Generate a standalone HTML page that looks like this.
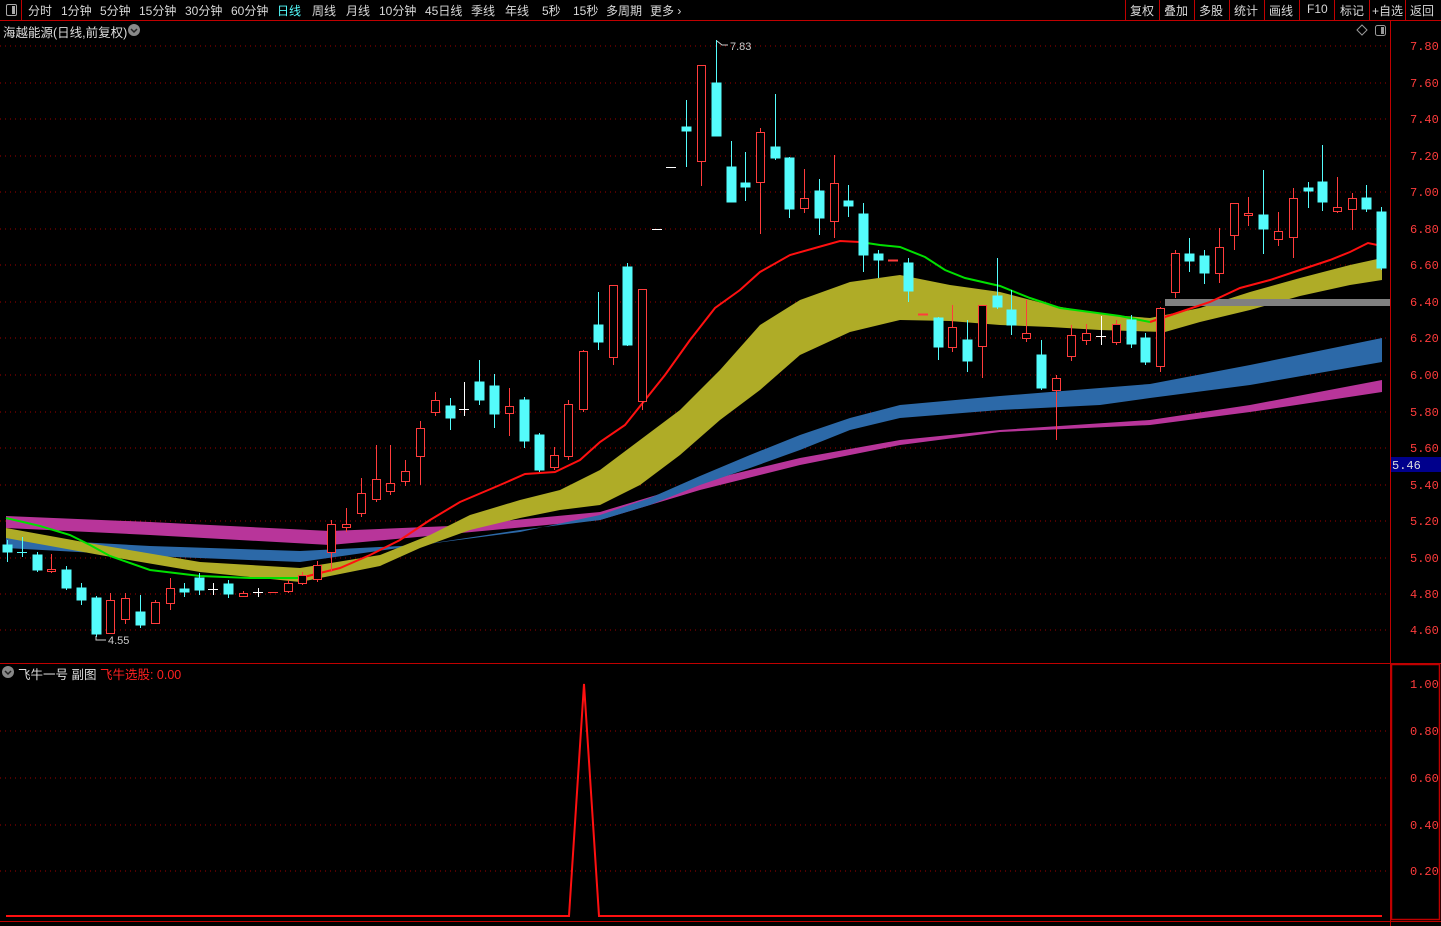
<!DOCTYPE html><html><head><meta charset="utf-8"><style>
body{margin:0;background:#000;width:1441px;height:926px;overflow:hidden;font-family:"Liberation Sans","Noto Sans CJK SC",sans-serif}
.tb{position:absolute;top:0;left:0;width:1441px;height:20px;border-bottom:1px solid #c00000;color:#d8d8d8;font-size:12px}
.tb span{position:absolute;top:2px}
</style></head><body>
<div class="tb">
<div style="position:absolute;left:0;top:0;width:21px;height:20px;border-right:1px solid #c00000"></div>
<div style="position:absolute;left:6px;top:4px;width:9px;height:10px;border:1px solid #aaa;border-radius:2px"><div style="position:absolute;right:1px;top:1px;width:3px;height:8px;background:#aaa"></div></div>
<span style="left:28px">分时</span><span style="left:61px">1分钟</span><span style="left:100px">5分钟</span><span style="left:139px">15分钟</span><span style="left:185px">30分钟</span><span style="left:231px">60分钟</span><span style="left:277px;color:#54fcfc">日线</span><span style="left:312px">周线</span><span style="left:346px">月线</span><span style="left:379px">10分钟</span><span style="left:425px">45日线</span><span style="left:471px">季线</span><span style="left:505px">年线</span><span style="left:542px">5秒</span><span style="left:573px">15秒</span><span style="left:606px">多周期</span><span style="left:650px">更多 ›</span>
<span style="left:1130px">复权</span><span style="left:1164px">叠加</span><span style="left:1199px">多股</span><span style="left:1234px">统计</span><span style="left:1269px">画线</span><span style="left:1307px">F10</span><span style="left:1340px">标记</span><span style="left:1372px">+自选</span><span style="left:1410px">返回</span>
</div>
<svg width="1441" height="926" style="position:absolute;left:0;top:0" xmlns="http://www.w3.org/2000/svg" font-family="Liberation Sans,Noto Sans CJK SC,sans-serif">
<g stroke="#c00000" stroke-width="1">
<line x1="1125.5" y1="0" x2="1125.5" y2="20"/><line x1="1159.5" y1="0" x2="1159.5" y2="20"/><line x1="1194.5" y1="0" x2="1194.5" y2="20"/><line x1="1229.5" y1="0" x2="1229.5" y2="20"/><line x1="1264.5" y1="0" x2="1264.5" y2="20"/><line x1="1299.5" y1="0" x2="1299.5" y2="20"/><line x1="1334.5" y1="0" x2="1334.5" y2="20"/><line x1="1369.5" y1="0" x2="1369.5" y2="20"/><line x1="1405.5" y1="0" x2="1405.5" y2="20"/>
<line x1="1390.5" y1="21" x2="1390.5" y2="926"/>
<line x1="0" y1="663.5" x2="1441" y2="663.5"/>
<rect x="1391.5" y="664.5" width="48" height="255" fill="none" stroke-width="1.5"/>
<line x1="0" y1="921.5" x2="1441" y2="921.5"/>
</g>
<g stroke="#a00000" stroke-dasharray="1 4">
<line x1="0" y1="46" x2="1388" y2="46"/><line x1="0" y1="83" x2="1388" y2="83"/><line x1="0" y1="119" x2="1388" y2="119"/><line x1="0" y1="156" x2="1388" y2="156"/><line x1="0" y1="192" x2="1388" y2="192"/><line x1="0" y1="229" x2="1388" y2="229"/><line x1="0" y1="265" x2="1388" y2="265"/><line x1="0" y1="302" x2="1388" y2="302"/><line x1="0" y1="338" x2="1388" y2="338"/><line x1="0" y1="375" x2="1388" y2="375"/><line x1="0" y1="412" x2="1388" y2="412"/><line x1="0" y1="448" x2="1388" y2="448"/><line x1="0" y1="485" x2="1388" y2="485"/><line x1="0" y1="521" x2="1388" y2="521"/><line x1="0" y1="558" x2="1388" y2="558"/><line x1="0" y1="594" x2="1388" y2="594"/><line x1="0" y1="630" x2="1388" y2="630"/>
<line x1="0" y1="731" x2="1388" y2="731"/><line x1="0" y1="778" x2="1388" y2="778"/><line x1="0" y1="825" x2="1388" y2="825"/><line x1="0" y1="871" x2="1388" y2="871"/>
</g>
<g fill="#ff3c3c" font-size="12" font-family="Liberation Mono,monospace">
<text x="1410" y="50">7.80</text><text x="1410" y="87">7.60</text><text x="1410" y="123">7.40</text><text x="1410" y="160">7.20</text><text x="1410" y="196">7.00</text><text x="1410" y="233">6.80</text><text x="1410" y="269">6.60</text><text x="1410" y="306">6.40</text><text x="1410" y="342">6.20</text><text x="1410" y="379">6.00</text><text x="1410" y="416">5.80</text><text x="1410" y="452">5.60</text><text x="1410" y="489">5.40</text><text x="1410" y="525">5.20</text><text x="1410" y="562">5.00</text><text x="1410" y="598">4.80</text><text x="1410" y="634">4.60</text>
<text x="1410" y="688">1.00</text><text x="1410" y="735">0.80</text><text x="1410" y="782">0.60</text><text x="1410" y="829">0.40</text><text x="1410" y="875">0.20</text>
</g>
<rect x="1391" y="457" width="50" height="15" fill="#00008c"/><text x="1392" y="469" fill="#ddd" font-size="12" font-family="Liberation Mono,monospace">5.46</text>
<polygon fill="#b8359a" points="6,516 150,522 330,531 450,526 600,512 700,482 800,458 900,440 1000,430 1150,420 1250,405 1382,380 1382,392 1250,412 1150,425 1000,432 900,445 800,465 700,490 600,520 450,534 330,545 150,535 6,528"/>
<polygon fill="#2c69a8" points="6,538 150,546 300,551 420,545 520,532 600,515 650,498 700,476 750,455 800,435 850,418 900,405 1000,396 1100,388 1150,384 1250,365 1382,338 1382,362 1250,385 1150,398 1100,405 1000,410 900,418 850,430 800,450 750,468 700,485 650,505 600,520 520,530 420,545 300,562 150,556 6,548"/>
<polygon fill="#afac27" points="6,528 100,545 200,562 300,568 380,555 430,535 470,515 520,500 560,490 600,470 640,440 680,410 720,370 760,325 800,300 850,282 900,275 950,285 1000,292 1050,305 1100,314 1150,318 1200,308 1250,292 1300,278 1350,265 1382,258 1382,280 1350,285 1300,296 1250,310 1200,322 1165,332 1100,330 1050,327 1000,325 950,321 900,320 850,332 800,355 760,390 720,420 680,455 640,485 600,505 560,510 520,518 470,530 420,548 380,566 300,582 200,572 100,555 6,538"/>
<rect x="1165" y="299" width="225" height="7" fill="#808080"/>
<polyline fill="none" stroke="#00e000" stroke-width="2" points="6,518 40,526 70,535 90,545 110,556 150,570 200,576 250,578 300,578"/>
<polyline fill="none" stroke="#ff1010" stroke-width="2" points="300,578 340,568 370,555 400,540 430,520 460,502 500,485 525,474 555,472 580,460 600,442 625,425 645,400 665,375 690,340 715,308 740,290 760,272 790,255 815,248 840,241 860,242"/>
<polyline fill="none" stroke="#00e000" stroke-width="2" points="860,242 880,245 900,247 925,257 945,270 965,278 1000,286 1030,298 1060,308 1090,312 1120,316 1150,322"/>
<polyline fill="none" stroke="#ff1010" stroke-width="2" points="1150,322 1180,312 1210,302 1240,288 1270,280 1300,270 1330,260 1350,252 1368,243 1382,246"/>
<g stroke-width="1">
<g stroke="#54fcfc" fill="#54fcfc">
<line x1="7.5" y1="540" x2="7.5" y2="562"/><rect x="3" y="545" width="9" height="7"/>
<line x1="37.5" y1="552" x2="37.5" y2="572"/><rect x="33" y="555" width="9" height="15"/>
<line x1="66.5" y1="566" x2="66.5" y2="590"/><rect x="62" y="570" width="9" height="18"/>
<line x1="81.5" y1="583" x2="81.5" y2="605"/><rect x="77" y="588" width="9" height="12"/>
<line x1="96.5" y1="596" x2="96.5" y2="637"/><rect x="92" y="598" width="9" height="36"/>
<line x1="140.5" y1="595" x2="140.5" y2="628"/><rect x="136" y="612" width="9" height="13"/>
<line x1="184.5" y1="583" x2="184.5" y2="597"/><rect x="180" y="589" width="9" height="3"/>
<line x1="199.5" y1="573" x2="199.5" y2="595"/><rect x="195" y="578" width="9" height="12"/>
<line x1="228.5" y1="580" x2="228.5" y2="598"/><rect x="224" y="584" width="9" height="10"/>
<line x1="450.5" y1="398" x2="450.5" y2="430"/><rect x="446" y="406" width="9" height="12"/>
<line x1="479.5" y1="360" x2="479.5" y2="405"/><rect x="475" y="382" width="9" height="18"/>
<line x1="494.5" y1="374" x2="494.5" y2="428"/><rect x="490" y="386" width="9" height="28"/>
<line x1="524.5" y1="397" x2="524.5" y2="448"/><rect x="520" y="400" width="9" height="41"/>
<line x1="539.5" y1="433" x2="539.5" y2="472"/><rect x="535" y="435" width="9" height="35"/>
<line x1="598.5" y1="292" x2="598.5" y2="350"/><rect x="594" y="325" width="9" height="17"/>
<line x1="627.5" y1="263" x2="627.5" y2="346"/><rect x="623" y="267" width="9" height="78"/>
<line x1="686.5" y1="100" x2="686.5" y2="167"/><rect x="682" y="127" width="9" height="4"/>
<line x1="716.5" y1="40" x2="716.5" y2="136"/><rect x="712" y="83" width="9" height="53"/>
<line x1="731.5" y1="141" x2="731.5" y2="202"/><rect x="727" y="167" width="9" height="35"/>
<line x1="745.5" y1="152" x2="745.5" y2="201"/><rect x="741" y="183" width="9" height="4"/>
<line x1="775.5" y1="94" x2="775.5" y2="160"/><rect x="771" y="147" width="9" height="11"/>
<line x1="789.5" y1="157" x2="789.5" y2="218"/><rect x="785" y="158" width="9" height="51"/>
<line x1="819.5" y1="179" x2="819.5" y2="235"/><rect x="815" y="191" width="9" height="27"/>
<line x1="848.5" y1="185" x2="848.5" y2="217"/><rect x="844" y="201" width="9" height="5"/>
<line x1="863.5" y1="203" x2="863.5" y2="272"/><rect x="859" y="214" width="9" height="41"/>
<line x1="878.5" y1="250" x2="878.5" y2="278"/><rect x="874" y="254" width="9" height="6"/>
<line x1="908.5" y1="258" x2="908.5" y2="302"/><rect x="904" y="263" width="9" height="28"/>
<line x1="938.5" y1="317" x2="938.5" y2="360"/><rect x="934" y="318" width="9" height="29"/>
<line x1="967.5" y1="320" x2="967.5" y2="372"/><rect x="963" y="340" width="9" height="21"/>
<line x1="997.5" y1="258" x2="997.5" y2="309"/><rect x="993" y="296" width="9" height="11"/>
<line x1="1011.5" y1="290" x2="1011.5" y2="335"/><rect x="1007" y="310" width="9" height="15"/>
<line x1="1041.5" y1="340" x2="1041.5" y2="390"/><rect x="1037" y="355" width="9" height="33"/>
<line x1="1131.5" y1="315" x2="1131.5" y2="348"/><rect x="1127" y="320" width="9" height="24"/>
<line x1="1145.5" y1="333" x2="1145.5" y2="365"/><rect x="1141" y="338" width="9" height="24"/>
<line x1="1189.5" y1="238" x2="1189.5" y2="272"/><rect x="1185" y="254" width="9" height="7"/>
<line x1="1204.5" y1="250" x2="1204.5" y2="284"/><rect x="1200" y="256" width="9" height="17"/>
<line x1="1263.5" y1="170" x2="1263.5" y2="254"/><rect x="1259" y="215" width="9" height="14"/>
<line x1="1308.5" y1="182" x2="1308.5" y2="208"/><rect x="1304" y="188" width="9" height="3"/>
<line x1="1322.5" y1="145" x2="1322.5" y2="211"/><rect x="1318" y="182" width="9" height="20"/>
<line x1="1366.5" y1="185" x2="1366.5" y2="212"/><rect x="1362" y="198" width="9" height="11"/>
<line x1="1381.5" y1="207" x2="1381.5" y2="270"/><rect x="1377" y="212" width="9" height="56"/>
<line x1="17" y1="552.5" x2="27" y2="552.5"/><line x1="22.5" y1="537" x2="22.5" y2="557"/>
</g>
<g stroke="#ff3c3c" fill="#000">
<line x1="51.5" y1="554" x2="51.5" y2="573"/><rect x="47.5" y="569.5" width="8" height="2"/>
<line x1="110.5" y1="593" x2="110.5" y2="634"/><rect x="106.5" y="600.5" width="8" height="33"/>
<line x1="125.5" y1="593" x2="125.5" y2="624"/><rect x="121.5" y="598.5" width="8" height="21"/>
<line x1="155.5" y1="600" x2="155.5" y2="624"/><rect x="151.5" y="602.5" width="8" height="21"/>
<line x1="170.5" y1="578" x2="170.5" y2="610"/><rect x="166.5" y="588.5" width="8" height="15"/>
<line x1="243.5" y1="591" x2="243.5" y2="597"/><rect x="239.5" y="593.5" width="8" height="3"/>
<line x1="268" y1="592.5" x2="278" y2="592.5"/>
<line x1="288.5" y1="580" x2="288.5" y2="593"/><rect x="284.5" y="583.5" width="8" height="8"/>
<line x1="302.5" y1="572" x2="302.5" y2="585"/><rect x="298.5" y="575.5" width="8" height="8"/>
<line x1="317.5" y1="561" x2="317.5" y2="582"/><rect x="313.5" y="565.5" width="8" height="14"/>
<line x1="331.5" y1="520" x2="331.5" y2="572"/><rect x="327.5" y="524.5" width="8" height="28"/>
<line x1="346.5" y1="508" x2="346.5" y2="532"/><rect x="342.5" y="524.5" width="8" height="3"/>
<line x1="361.5" y1="478" x2="361.5" y2="517"/><rect x="357.5" y="493.5" width="8" height="20"/>
<line x1="376.5" y1="445" x2="376.5" y2="502"/><rect x="372.5" y="479.5" width="8" height="20"/>
<line x1="390.5" y1="445" x2="390.5" y2="495"/><rect x="386.5" y="483.5" width="8" height="8"/>
<line x1="405.5" y1="460" x2="405.5" y2="486"/><rect x="401.5" y="471.5" width="8" height="10"/>
<line x1="420.5" y1="421" x2="420.5" y2="485"/><rect x="416.5" y="428.5" width="8" height="28"/>
<line x1="435.5" y1="392" x2="435.5" y2="416"/><rect x="431.5" y="400.5" width="8" height="12"/>
<line x1="509.5" y1="388" x2="509.5" y2="436"/><rect x="505.5" y="406.5" width="8" height="7"/>
<line x1="554.5" y1="447" x2="554.5" y2="470"/><rect x="550.5" y="455.5" width="8" height="12"/>
<line x1="568.5" y1="400" x2="568.5" y2="460"/><rect x="564.5" y="404.5" width="8" height="52"/>
<line x1="583.5" y1="350" x2="583.5" y2="412"/><rect x="579.5" y="351.5" width="8" height="58"/>
<line x1="613.5" y1="285" x2="613.5" y2="365"/><rect x="609.5" y="285.5" width="8" height="72"/>
<line x1="642.5" y1="289" x2="642.5" y2="410"/><rect x="638.5" y="289.5" width="8" height="112"/>
<line x1="701.5" y1="65" x2="701.5" y2="186"/><rect x="697.5" y="65.5" width="8" height="96"/>
<line x1="760.5" y1="128" x2="760.5" y2="234"/><rect x="756.5" y="132.5" width="8" height="50"/>
<line x1="804.5" y1="169" x2="804.5" y2="213"/><rect x="800.5" y="198.5" width="8" height="10"/>
<line x1="834.5" y1="155" x2="834.5" y2="238"/><rect x="830.5" y="183.5" width="8" height="38"/>
<line x1="888" y1="260.5" x2="898" y2="260.5" stroke-width="2"/>
<line x1="918" y1="314.5" x2="928" y2="314.5" stroke-width="2"/>
<line x1="952.5" y1="305" x2="952.5" y2="352"/><rect x="948.5" y="327.5" width="8" height="20"/>
<line x1="982.5" y1="305" x2="982.5" y2="378"/><rect x="978.5" y="305.5" width="8" height="41"/>
<line x1="1026.5" y1="300" x2="1026.5" y2="342"/><rect x="1022.5" y="333.5" width="8" height="5"/>
<line x1="1056.5" y1="375" x2="1056.5" y2="440"/><rect x="1052.5" y="378.5" width="8" height="12"/>
<line x1="1071.5" y1="325" x2="1071.5" y2="361"/><rect x="1067.5" y="335.5" width="8" height="21"/>
<line x1="1086.5" y1="324" x2="1086.5" y2="345"/><rect x="1082.5" y="333.5" width="8" height="7"/>
<line x1="1116.5" y1="320" x2="1116.5" y2="345"/><rect x="1112.5" y="324.5" width="8" height="18"/>
<line x1="1160.5" y1="307" x2="1160.5" y2="372"/><rect x="1156.5" y="308.5" width="8" height="58"/>
<line x1="1175.5" y1="250" x2="1175.5" y2="298"/><rect x="1171.5" y="253.5" width="8" height="39"/>
<line x1="1219.5" y1="228" x2="1219.5" y2="283"/><rect x="1215.5" y="247.5" width="8" height="26"/>
<line x1="1234.5" y1="203" x2="1234.5" y2="250"/><rect x="1230.5" y="203.5" width="8" height="32"/>
<line x1="1248.5" y1="197" x2="1248.5" y2="226"/><rect x="1244.5" y="213.5" width="8" height="2"/>
<line x1="1278.5" y1="212" x2="1278.5" y2="246"/><rect x="1274.5" y="231.5" width="8" height="8"/>
<line x1="1293.5" y1="188" x2="1293.5" y2="258"/><rect x="1289.5" y="198.5" width="8" height="39"/>
<line x1="1337.5" y1="177" x2="1337.5" y2="213"/><rect x="1333.5" y="207.5" width="8" height="4"/>
<line x1="1352.5" y1="193" x2="1352.5" y2="230"/><rect x="1348.5" y="198.5" width="8" height="11"/>
</g>
<g stroke="#fff">
<line x1="208" y1="589.5" x2="218" y2="589.5"/><line x1="213.5" y1="583" x2="213.5" y2="595"/>
<line x1="253" y1="592.5" x2="263" y2="592.5"/><line x1="258.5" y1="588" x2="258.5" y2="597"/>
<line x1="459" y1="409.5" x2="469" y2="409.5"/><line x1="464.5" y1="382" x2="464.5" y2="416"/>
<line x1="652" y1="229.5" x2="662" y2="229.5"/><line x1="666" y1="167.5" x2="676" y2="167.5"/>
<line x1="1096" y1="336.5" x2="1106" y2="336.5"/><line x1="1101.5" y1="316" x2="1101.5" y2="345"/>
</g>
</g>
<text x="108" y="644" fill="#ccc" font-size="11">4.55</text><path d="M96,636 v4 h10" stroke="#ccc" fill="none"/>
<text x="730" y="50" fill="#ccc" font-size="11">7.83</text><path d="M717,41 l5,4 h6" stroke="#ccc" fill="none"/>
<polyline fill="none" stroke="#ff1010" stroke-width="2" points="6,916 569,916 584,684 599,916 1382,916"/>
<path d="M1362,25 l5,5 -5,5 -5,-5z" fill="none" stroke="#999"/>
<rect x="1375.5" y="25.5" width="10" height="10" rx="2" fill="none" stroke="#999"/><rect x="1381" y="27" width="3" height="7" fill="#999"/>
<circle cx="134" cy="30" r="6" fill="#888"/><path d="M131,29 l3,3 3,-3" stroke="#222" fill="none" stroke-width="1.5"/>
<circle cx="8" cy="672" r="6" fill="#888"/><path d="M5,671 l3,3 3,-3" stroke="#222" fill="none" stroke-width="1.5"/>
</svg>
<div style="position:absolute;left:3px;top:22px;color:#ddd;font-size:12.5px">海越能源(日线,前复权)</div>
<div style="position:absolute;left:18px;top:664px;font-size:12.5px;color:#ddd">飞牛一号 副图 <span style="color:#ff2020">飞牛选股: 0.00</span></div>
</body></html>
